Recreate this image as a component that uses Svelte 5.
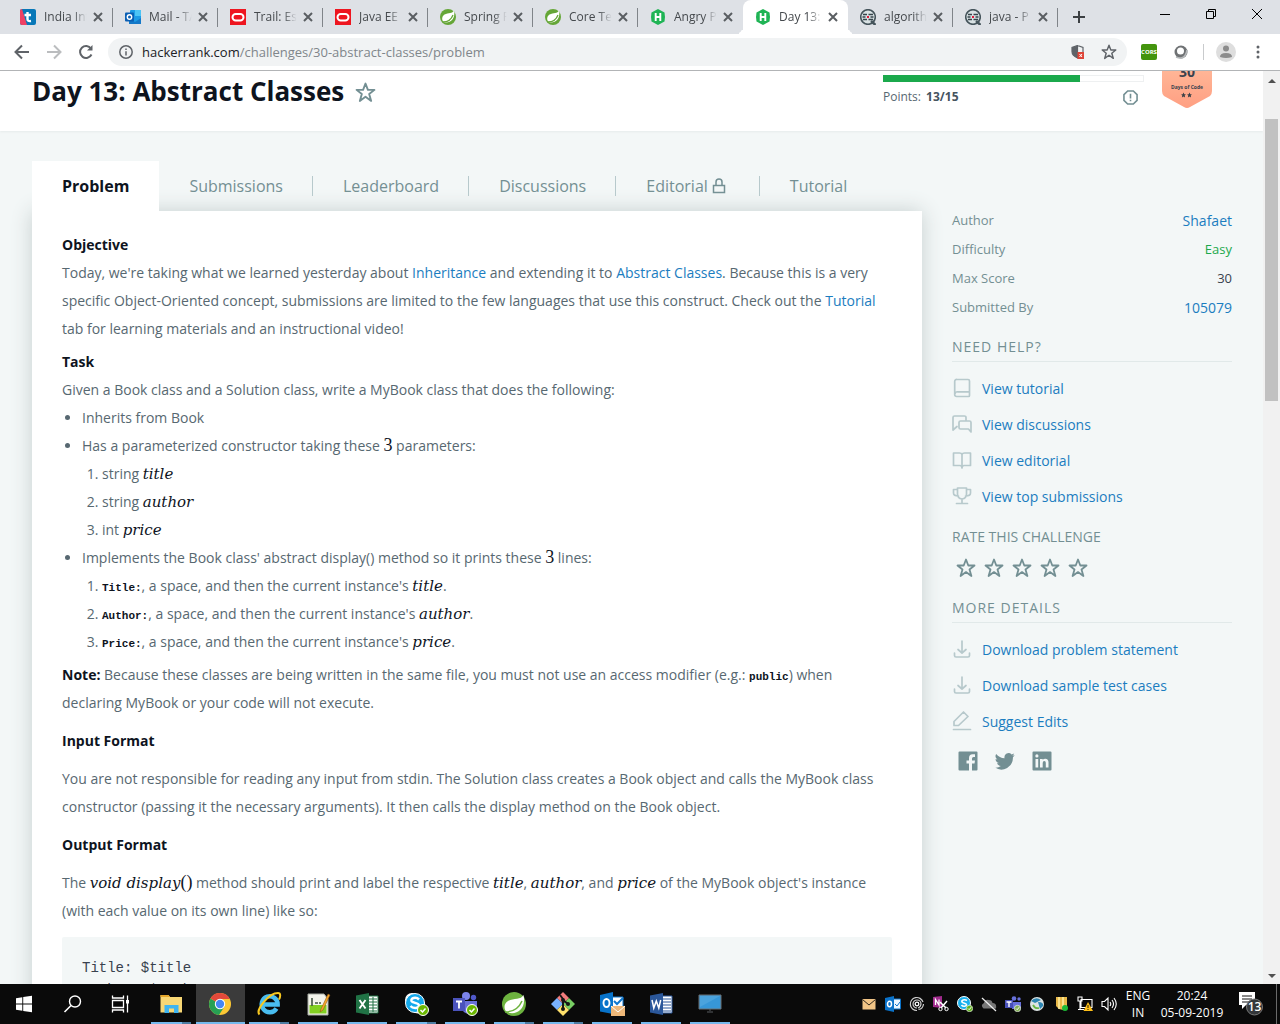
<script lang="ts">
  const browserTabs = [
    { icon: 'tcs', title: 'India Int' },
    { icon: 'outlook', title: 'Mail - TA' },
    { icon: 'oracle', title: 'Trail: Ess' },
    { icon: 'oracle', title: 'Java EE' },
    { icon: 'spring', title: 'Spring F' },
    { icon: 'spring', title: 'Core Te' },
    { icon: 'hacker', title: 'Angry P' },
    { icon: 'hacker', title: 'Day 13:', active: true },
    { icon: 'review', title: 'algorith' },
    { icon: 'review', title: 'java - P' },
  ];
  const sections = ['Submissions', 'Leaderboard', 'Discussions', 'Editorial', 'Tutorial'];
  const facts = [
    { label: 'Author', value: 'Shafaet', kind: 'link' },
    { label: 'Difficulty', value: 'Easy', kind: 'easy' },
    { label: 'Max Score', value: '30', kind: 'plain' },
    { label: 'Submitted By', value: '105079', kind: 'link' },
  ];
  const help = [
    { icon: 'book', text: 'View tutorial' },
    { icon: 'chat', text: 'View discussions' },
    { icon: 'open', text: 'View editorial' },
    { icon: 'trophy', text: 'View top submissions' },
  ];
  const details = [
    { icon: 'download', text: 'Download problem statement' },
    { icon: 'download', text: 'Download sample test cases' },
    { icon: 'edit', text: 'Suggest Edits' },
  ];
  const apps = [
    { icon: 'start', label: 'Start', open: false },
    { icon: 'search', label: 'Search', open: false },
    { icon: 'taskview', label: 'Task View', open: false },
    { icon: 'explorer', label: 'File Explorer', open: true, stack: true },
    { icon: 'chrome', label: 'Chrome', open: true, active: true },
    { icon: 'ie', label: 'Internet Explorer', open: true, stack: true },
    { icon: 'notepad', label: 'Notepad++', open: true },
    { icon: 'excel', label: 'Excel', open: true },
    { icon: 'skype', label: 'Skype', open: true, stack: true },
    { icon: 'teams', label: 'Teams', open: true },
    { icon: 'spring', label: 'Spring', open: true, stack: true },
    { icon: 'git', label: 'Git', open: true, stack: true },
    { icon: 'outlookmail', label: 'Outlook', open: true },
    { icon: 'word', label: 'Word', open: true },
    { icon: 'monitor', label: 'Remote Desktop', open: true },
  ];
  const tray = ['mail', 'outlooktray', 'swirl', 'onenote', 'skype', 'cloud', 'teams', 'globe', 'folder', 'network', 'sound'];
  const score = 13;
  const steps = [
    { code: 'Title:', name: 'title' },
    { code: 'Author:', name: 'author' },
    { code: 'Price:', name: 'price' },
  ];
</script>

{#snippet favicon(name: string)}
  <svg class="favicon" viewBox="0 0 16 16" aria-hidden="true">
    {#if name === 'tcs'}
      <rect width="16" height="16" rx="2" fill="#0878b8" />
      <path d="M0 2q0-2 2-2l5 16H2q-2 0-2-2z" fill="#ef4164" />
      <path d="M7.500 3v7q0 2.500 3.500 2M4.500 6H11" fill="none" stroke="#fff" stroke-width="2.400" />
    {:else if name === 'outlook'}
      <rect x="5" y="1" width="11" height="12" rx="1" fill="#1c9be6" />
      <path d="M10 1h6v6h-6z" fill="#4cc4f5" />
      <path d="M4 9l6 4 6-4v6H4z" fill="#1478c8" />
      <rect y="3.500" width="9" height="9" rx="1" fill="#0a5fb4" />
      <circle cx="4.500" cy="8" r="2.200" fill="none" stroke="#fff" stroke-width="1.400" />
    {:else if name === 'oracle'}
      <rect width="16" height="16" fill="#ee1620" />
      <rect x="2.500" y="5" width="11" height="6.500" rx="3.200" fill="none" stroke="#fff" stroke-width="2" />
    {:else if name === 'spring'}
      <circle cx="8" cy="8" r="8" fill="#65a637" />
      <path d="M14 1.500C12.500 5 8.500 3.500 4.500 5.500 1 8 2 12 4 13.200c5 1.600 12-2.400 10-11.700z" fill="#fff" />
      <path d="M3 13c5 0 8.500-3 10-7" fill="none" stroke="#65a637" stroke-width="1.300" />
    {:else if name === 'hacker'}
      <path d="M8 0l6.500 3.500L15 8l-.5 4.500L8 16l-6.500-3.500L1 8l.5-4.500z" fill="#1fb455" />
      <path d="M5.700 4v8M10.300 4v8M5.700 8h4.600" fill="none" stroke="#fff" stroke-width="1.900" />
    {:else}
      <circle cx="8" cy="8" r="7.300" fill="#d9e2e4" stroke="#45545b" stroke-width="1.600" />
      <path d="M3 5.500h4M8.500 5.500H13M2.500 8h3M10.500 8h3M3 10.500h4M8.500 10.500H13" stroke="#36444b" stroke-width="1.600" />
      <path d="M7 8h2" stroke="#df1a3b" stroke-width="2" />
      <path d="M11 12l4.500 4" stroke="#45545b" stroke-width="2.500" />
    {/if}
  </svg>
{/snippet}

{#snippet star()}
  <svg class="star" viewBox="0 0 20 20" aria-hidden="true">
    <path d="M10 1.500l2.300 6h6.200l-5 4 1.900 6.500-5.400-3.900L4.600 18l1.900-6.500-5-4h6.200z" fill="none" stroke="currentColor" stroke-width="1.800" stroke-linejoin="round" />
  </svg>
{/snippet}

{#snippet lineIcon(name: string)}
  <svg class="line-icon" viewBox="0 0 20 20" aria-hidden="true">
    {#if name === 'book'}
      <path d="M5 1.500h11a1.500 1.500 0 0 1 1.500 1.500v14.500a1 1 0 0 1-1 1H4.500A1.800 1.800 0 0 1 2.700 16.700V3.500a2 2 0 0 1 2.300-2zM3 15.500q1-2 2.500-1.700h12" />
    {:else if name === 'chat'}
      <path d="M1 16V3.500A1.500 1.500 0 0 1 2.500 2h10A1.500 1.500 0 0 1 14 3.500V6M1 16l4-3.500M8.500 7h9A1.500 1.500 0 0 1 19 8.500V18l-2.500-3h-8A1.500 1.500 0 0 1 7 13.500v-5A1.500 1.500 0 0 1 8.500 7z" />
    {:else if name === 'open'}
      <path d="M10 4.500Q9.500 3 7.500 3h-6v12.500H8q2 0 2 2.500 0-2.500 2-2.500h6.500V3h-6Q10.500 3 10 4.500zV17" />
    {:else if name === 'trophy'}
      <path d="M5.500 2h9v6q0 4.500-4.500 5-4.500-.5-4.500-5zM5.500 3.500h-4V7q0 3 5 3M14.500 3.500h4V7q0 3-5 3M10 13v4M4.500 17.500h11" />
    {:else if name === 'download'}
      <path d="M10 2v12M6 10.500l4 3.500 4-3.500M2.500 14v2.500q0 1.500 1.500 1.500h12q1.500 0 1.500-1.500V14" />
    {:else}
      <path d="M2 14.500v-4L11.500 1 16 5.500 6.500 14.500zM1.500 18.500h17" />
    {/if}
  </svg>
{/snippet}

{#snippet check()}
  <circle cx="20" cy="19" r="5.500" fill="#6bb700" stroke="#fff" stroke-width="1" />
  <path d="M17.500 19l2 2 3-3.500" fill="none" stroke="#fff" stroke-width="1.500" />
{/snippet}

{#snippet appIcon(name: string)}
  <svg class="app-icon" viewBox="0 0 26 26" aria-hidden="true">
    {#if name === 'start'}
      <path d="M5 7.200l6.300-1v6.300H5zM12.200 6l8.800-1.300v7.800h-8.800zM5 13.400h6.300v6.300l-6.300-1zM12.200 13.400H21v7.800l-8.800-1.300z" fill="#fff" />
    {:else if name === 'search'}
      <circle cx="15" cy="10.500" r="5.500" fill="none" stroke="#fff" stroke-width="1.400" />
      <path d="M11 14.500L4.500 21" stroke="#fff" stroke-width="1.600" />
    {:else if name === 'taskview'}
      <path d="M3.500 4.500V7h11V4.500M3.500 9.500h11v7h-11zM3.500 21.500V19h11v2.500M18.500 4.500v17" fill="none" stroke="#fff" stroke-width="1.300" />
      <path d="M17 9h3v3.500h-3z" fill="#fff" />
    {:else if name === 'explorer'}
      <path d="M2.500 4h8l1.500 2h12v15.500H2.500z" fill="#f8d775" />
      <path d="M2.500 4h8l1.500 2h-9.500z" fill="#e5a72c" />
      <path d="M6.500 14h14v8H16v-4.500h-5V22H6.500z" fill="#3fb4f0" />
    {:else if name === 'chrome'}
      <circle cx="13" cy="13" r="11" fill="#fbc734" />
      <path d="M13 13L3.500 7.500A11 11 0 0 0 12 24l5.500-8.500z" fill="#27a054" />
      <path d="M13 13L3.500 7.500A11 11 0 0 1 22.700 8H13z" fill="#e3493b" />
      <circle cx="13" cy="13" r="5.200" fill="#fff" />
      <circle cx="13" cy="13" r="4.200" fill="#4587f3" />
    {:else if name === 'ie'}
      <path d="M20.500 17.500a8 8 0 1 1 1.200-4H7" fill="none" stroke="#49bdf0" stroke-width="4.400" />
      <path d="M3.500 23.500C-1 19 13 2 22 2c3 0 2.500 4 1 6.500" fill="none" stroke="#f8c81f" stroke-width="2" />
    {:else if name === 'notepad'}
      <path d="M3 3h16l4 5v16H3z" fill="#f4f4ec" stroke="#a6aaa2" />
      <path d="M4.500 14h17v8.500h-17z" fill="#82d022" />
      <path d="M7 7v8M10 12h3M14 12h2" stroke="#454" stroke-width="1.600" />
      <path d="M16 18l7-15 2 1-7 15-3 2z" fill="#f5a52a" stroke="#855114" stroke-width=".5" />
    {:else if name === 'excel' || name === 'word'}
      <path d="M13 5h11v17H13z" fill="#fff" stroke={name === 'excel' ? '#207245' : '#2b579a'} />
      <path d="M15 8h8M15 11h8M15 14h8M15 17h8M15 20h8" stroke={name === 'excel' ? '#207245' : '#2b579a'} />
      {#if name === 'excel'}<path d="M19 6v15" stroke="#207245" />{/if}
      <path d="M2 4.500L15 2v22L2 21.500z" fill={name === 'excel' ? '#207245' : '#2b579a'} />
      {#if name === 'excel'}
        <path d="M5.500 9l6 8.500M11.500 9l-6 8.500" stroke="#fff" stroke-width="1.900" />
      {:else}
        <path d="M4 9l1.800 8L8.300 10l2.500 7L12.700 9" fill="none" stroke="#fff" stroke-width="1.500" />
      {/if}
    {:else if name === 'skype'}
      <circle cx="9" cy="9" r="7" fill="#fff" /><circle cx="15" cy="15" r="7.500" fill="#fff" />
      <circle cx="12" cy="12" r="9.500" fill="#14a9ec" stroke="#fff" />
      <path d="M16 8.500C13 5.500 7.500 7 8.500 10c1 2.300 7.500 1.500 7.500 4.500 0 3-6 3.500-8.500.5" fill="none" stroke="#fff" stroke-width="2.500" />
      {@render check()}
    {:else if name === 'teams'}
      <circle cx="14" cy="5" r="4" fill="#7b83eb" /><circle cx="21.500" cy="6.500" r="2.700" fill="#5059c9" />
      <path d="M10 10h15v7q0 6-7 6-8 0-8-7z" fill="#6970d8" />
      <path d="M1 7h12v13H1z" fill="#4b53bc" />
      <path d="M4 10.500h6M7 10.500v7" stroke="#fff" stroke-width="1.800" />
      {@render check()}
    {:else if name === 'spring'}
      <circle cx="13" cy="13" r="12" fill="#6db33f" />
      <path d="M22.500 4C20 9 13 7 7 10c-5 3-4 9-1 11 8 4 20-2 16.500-17z" fill="#fff" />
      <path d="M4 21c8 0 14-4 17-11" fill="none" stroke="#6db33f" stroke-width="1.500" />
    {:else if name === 'git'}
      <path d="M13 1l6 6-6 6-6-6z" fill="#f37c7c" /><path d="M7 7l6 6-6 6-6-6z" fill="#78b2ff" />
      <path d="M19 7l6 6-6 6-6-6z" fill="#78ce63" /><path d="M13 13l6 6-6 6-6-6z" fill="#ffe16b" />
      <path d="M10 4l3 4v10M13 9l5 4" fill="none" stroke="#171717" stroke-width="2" />
      <circle cx="13" cy="9" r="2" fill="#171717" /><circle cx="18" cy="13" r="2" fill="#171717" /><circle cx="13" cy="18" r="2" fill="#171717" />
    {:else if name === 'outlookmail'}
      <path d="M12 6h12v11H12z" fill="#fff" stroke="#0f78d0" /><path d="M15 10l3 3 6-6" fill="none" stroke="#0f78d0" stroke-width="2" />
      <path d="M1 4l13-3v22L1 20.500z" fill="#0873ca" />
      <ellipse cx="7.500" cy="12" rx="3" ry="4" fill="none" stroke="#fff" stroke-width="1.900" />
      <path d="M12 15h14v10H12z" fill="#efb879" /><path d="M12 15l7 6 7-6" fill="none" stroke="#fff" />
    {:else}
      <path d="M2 4h22v14H2z" fill="#3797d8" stroke="#6b7175" /><path d="M10 21h6M12 19h2" stroke="#575b5f" />
      <path d="M3 5h20L3 16z" fill="#4ba3dd" />
    {/if}
  </svg>
{/snippet}

{#snippet trayIcon(name: string)}
  <svg class="tray-icon" viewBox="0 0 16 16" aria-hidden="true">
    {#if name === 'mail'}
      <path d="M1.500 3h13v10.500h-13z" fill="#f1c486" /><path d="M1.500 3.500L8 9l6.500-5.500" fill="none" stroke="#30271d" />
    {:else if name === 'outlooktray'}
      <path d="M8 3h7.500v10H8z" fill="#eaf5ff" stroke="#0a72c9" /><path d="M10 8l2 2 3-4" fill="none" stroke="#0a72c9" />
      <path d="M0 2l9-2v16l-9-2z" fill="#0a72c9" /><ellipse cx="4.500" cy="8" rx="2" ry="2.700" fill="none" stroke="#fff" stroke-width="1.500" />
    {:else if name === 'swirl'}
      <path d="M8 14.500A6.500 6.500 0 1 1 14 6M14.500 8q-.5 5-5 5.500M8 12a4 4 0 1 1 4-4q-.5 3.500-3 4" fill="none" stroke="#cfcfcf" stroke-width="1.200" />
      <circle cx="8" cy="8" r="1.800" fill="none" stroke="#fff" stroke-width="1.300" />
    {:else if name === 'onenote'}
      <path d="M0 1l9-1v12l-9-1z" fill="#a12b8d" /><path d="M2.500 9V3.500L6 9V3.500" fill="none" stroke="#fff" stroke-width="1.300" />
      <path d="M7 6l6 6M14 5l-6 7" stroke="#fff" stroke-width="1.500" />
      <circle cx="7.500" cy="13" r="1.700" fill="none" stroke="#fff" /><circle cx="13.500" cy="13" r="1.700" fill="none" stroke="#fff" />
    {:else if name === 'skype'}
      <circle cx="7" cy="7" r="6.500" fill="#18b0ed" stroke="#fff" /><path d="M10 4.500C7.500 3 4 4 5 6c1 1.500 5 1 4.500 3-.5 1.800-4 1.500-5 0" fill="none" stroke="#fff" stroke-width="1.600" />
      <circle cx="12.500" cy="12.500" r="3.200" fill="#61b21e" stroke="#fff" stroke-width=".6" /><path d="M11 12.500l1.200 1.200 2-2.500" fill="none" stroke="#fff" />
    {:else if name === 'cloud'}
      <path d="M2.500 12.500Q-1 9 3 7q1-4 5-3 3 0 3.500 3Q16 7 15 12.500z" fill="#777" /><path d="M1 2l14 13" stroke="#eee" stroke-width="1.200" />
    {:else if name === 'teams'}
      <circle cx="9" cy="2.500" r="2.300" fill="#6871dc" /><circle cx="14" cy="3" r="1.700" fill="#6871dc" /><path d="M7 6h9v7H7z" fill="#6871dc" />
      <path d="M0 4h8v8H0z" fill="#4850b8" /><path d="M1.500 6h5M4 6v5" stroke="#fff" stroke-width="1.400" />
      <circle cx="12.500" cy="12.500" r="3.200" fill="#81ad56" stroke="#fff" stroke-width=".6" /><path d="M11 12.500l1.200 1.200 2-2.500" fill="none" stroke="#fff" />
    {:else if name === 'globe'}
      <circle cx="8" cy="8" r="7" fill="#dce3e3" /><path d="M2 5q5-5 10-1L6 7zM9 6q6 0 5 4l-3 3z" fill="#2d86b3" /><path d="M4 9q2 4 6 3" fill="none" stroke="#67b744" stroke-width="1.800" />
    {:else if name === 'folder'}
      <path d="M3 1h11v11l-4 2-4-1-3-3z" fill="#e9b949" /><path d="M6 1v12M10 1v12" stroke="#fff0a3" stroke-width="1.500" /><circle cx="12" cy="12" r="3" fill="#1dba36" />
    {:else if name === 'network'}
      <path d="M1 1h4v4H1zM4 3.500h11v8H4zM3 5v8M1 13.500h6" fill="none" stroke="#fff" stroke-width="1.100" />
      <path d="M11 6l5 9H6.500z" fill="#ffbf18" /><path d="M11 9v3M11 13v1" stroke="#271c00" />
    {:else}
      <path d="M1 5.500h2.500L7 2v12l-3.500-3.500H1zM9 6q1.500 2 0 4M11 4q3 4 0 8M13 2q4.500 6 0 12" fill="none" stroke="#fff" stroke-width="1.100" />
    {/if}
  </svg>
{/snippet}

<div class="desktop">
  <div class="tab-strip">
    {#each browserTabs as tab}
      <div class="browser-tab" class:active={tab.active}>
        {@render favicon(tab.icon)}
        <span class="tab-title">{tab.title}</span>
        <button class="close" aria-label="Close tab">
          <svg viewBox="0 0 10 10"><path d="M1 1l8 8M9 1L1 9" /></svg>
        </button>
      </div>
    {/each}
    <button class="new-tab" aria-label="New tab"><svg viewBox="0 0 12 12"><path d="M6 0v12M0 6h12" /></svg></button>
    <div class="window-controls">
      <button aria-label="Minimize"><svg viewBox="0 0 10 10"><path d="M0 5.500h10" /></svg></button>
      <button aria-label="Restore"><svg viewBox="0 0 10 10"><path d="M.5 2.500h7v7h-7zM2.500 2.500v-2h7v7h-2" /></svg></button>
      <button aria-label="Close"><svg viewBox="0 0 10 10"><path d="M0 0l10 10M10 0L0 10" /></svg></button>
    </div>
  </div>

  <div class="toolbar">
    <div class="nav-buttons">
      <button class="nav" aria-label="Back"><svg viewBox="0 0 16 16"><path d="M15 8H2M8 1.500L1.500 8 8 14.500" /></svg></button>
      <button class="nav faded" aria-label="Forward"><svg viewBox="0 0 16 16"><path d="M1 8h13M8 1.500L14.500 8 8 14.500" /></svg></button>
      <button class="nav" aria-label="Reload"><svg viewBox="0 0 16 16"><path d="M13.500 10.500A6 6 0 1 1 13 4.500" /><path d="M14.500 1v5.500H9z" fill="currentColor" stroke="none" /></svg></button>
    </div>
    <div class="address">
      <svg class="info" viewBox="0 0 14 14" aria-hidden="true"><circle cx="7" cy="7" r="6.200" /><path d="M7 6.200v4.300M7 3.500v1.500" /></svg>
      <a class="url" href="#problem">hackerrank.com<span>/challenges/30-abstract-classes/problem</span></a>
      <svg class="shield" viewBox="0 0 14 14" aria-hidden="true">
        <path d="M6.500.5L1 2.500v4q0 4 5.500 6.500zM6.500.5L12 2.500V7" fill="none" stroke="#5f6368" stroke-width="1.200" />
        <path d="M6.500.5L1 2.500v4q0 4 5.500 6.500z" fill="#5f6368" />
        <path d="M6.500 7H13v7H6.500z" fill="#df4538" /><path d="M8.500 9l2.500 3M11 9l-2.500 3" stroke="#fff" />
      </svg>
      <button class="bookmark" aria-label="Bookmark">{@render star()}</button>
    </div>
    <button class="cors">CORS</button>
    <svg class="ring" viewBox="0 0 14 14" aria-hidden="true"><circle cx="7" cy="7" r="6.500" fill="#6f7274" /><path d="M2 12q9 4 11-7" fill="none" stroke="#b5b8ba" stroke-width="1.500" /><circle cx="6.500" cy="6" r="3.500" fill="#fff" /></svg>
    <span class="divider"></span>
    <svg class="avatar" viewBox="0 0 20 20" aria-hidden="true"><circle cx="10" cy="10" r="10" fill="#dedede" /><circle cx="10" cy="6.500" r="3" fill="#8c8c8c" /><path d="M4 15q0-4 6-4t6 4q-6 2-12 0z" fill="#8c8c8c" /></svg>
    <button class="more" aria-label="Menu"><svg viewBox="0 0 4 14"><circle cx="2" cy="2" r="1.500" /><circle cx="2" cy="7" r="1.500" /><circle cx="2" cy="12" r="1.500" /></svg></button>
  </div>

  <div class="viewport">
    <div class="page">
      <header>
        <h1>Day 13: Abstract Classes</h1>
        <button class="favourite" aria-label="Bookmark challenge">{@render star()}</button>
        <div class="progress">
          <div class="track"><div class="fill" style:width="76%"></div></div>
          <div class="points">
            <span>Points: <b>{score}/15</b></span>
            <svg viewBox="0 0 16 16" aria-hidden="true"><path d="M5 1h6l4 4v6l-4 4H5l-4-4V5zM8 4v5M8 10.500V12" /></svg>
          </div>
        </div>
        <svg class="badge" viewBox="0 0 50 37" role="img" aria-label="30 Days of Code">
          <defs><linearGradient id="peach" x1="0" y1="0" x2="0" y2="1"><stop offset="0" stop-color="#ffb596" /><stop offset="1" stop-color="#ff9f82" /></linearGradient></defs>
          <path d="M0 0h50v20q0 3-2 5L28 36q-3 2-6 0L2 25q-2-2-2-5z" fill="url(#peach)" />
          <text x="25" y="6" class="badge-number">30</text>
          <text x="25" y="18" class="badge-text">Days of Code</text>
          <path d="M21.500 21.500l.8 1.700 1.700.2-1.300 1.200.4 1.900-1.600-1-1.600 1 .4-1.900-1.300-1.200 1.700-.2zM27.500 21.500l.8 1.700 1.700.2-1.300 1.200.4 1.900-1.600-1-1.600 1 .4-1.900-1.300-1.200 1.700-.2z" fill="#3b4147" />
        </svg>
      </header>

      <div class="columns">
        <div class="main-column">
          <nav class="section-tabs">
            <a class="current" href="#problem">Problem</a>
            {#each sections as section}
              <a href="#{section}"><span>{section}</span>{#if section === 'Editorial'}<svg viewBox="0 0 14 16" aria-hidden="true"><path d="M1.500 7.500h11v7h-11zM4 7V4q0-3 3-3t3 3v3" /></svg>{/if}</a>
            {/each}
          </nav>
          <main id="problem">
            <p class="objective"><b>Objective</b><br />
              Today, we're taking what we learned yesterday about <a href="#inheritance">Inheritance</a> and extending it to <a href="#abstract">Abstract Classes</a>. Because this is a very specific Object-Oriented concept, submissions are limited to the few languages that use this construct. Check out the <a href="#tutorial">Tutorial</a> tab for learning materials and an instructional video!</p>
            <p><b>Task</b><br />Given a Book class and a Solution class, write a MyBook class that does the following:</p>
            <ul>
              <li>Inherits from Book</li>
              <li>Has a parameterized constructor taking these <span class="num">3</span> parameters:
                <ol>
                  <li>string <i>title</i></li>
                  <li>string <i>author</i></li>
                  <li>int <i>price</i></li>
                </ol>
              </li>
              <li>Implements the Book class' abstract display() method so it prints these <span class="num">3</span> lines:
                <ol>
                  {#each steps as step}
                    <li><code>{step.code}</code>, a space, and then the current instance's <i>{step.name}</i>.</li>
                  {/each}
                </ol>
              </li>
            </ul>
            <p class="note"><b>Note:</b> Because these classes are being written in the same file, you must not use an access modifier (e.g.: <code>public</code>) when declaring MyBook or your code will not execute.</p>
            <h2>Input Format</h2>
            <p>You are not responsible for reading any input from stdin. The Solution class creates a Book object and calls the MyBook class constructor (passing it the necessary arguments). It then calls the display method on the Book object.</p>
            <h2>Output Format</h2>
            <p>The <i>void display</i><span class="num">()</span> method should print and label the respective <i>title</i>, <i>author</i>, and <i>price</i> of the MyBook object's instance (with each value on its own line) like so:</p>
            <pre>{'Title: $title\nAuthor: $author\nPrice: $price'}</pre>
          </main>
        </div>

        <aside>
          <dl>
            {#each facts as fact}
              <div><dt>{fact.label}</dt><dd class={fact.kind}>{#if fact.kind === 'link'}<a href="#fact">{fact.value}</a>{:else}{fact.value}{/if}</dd></div>
            {/each}
          </dl>
          <h3 class="ruled">NEED HELP?</h3>
          <ul class="links">
            {#each help as item}<li>{@render lineIcon(item.icon)}<a href="#help">{item.text}</a></li>{/each}
          </ul>
          <h3>RATE THIS CHALLENGE</h3>
          <div class="stars">
            {#each [1, 2, 3, 4, 5] as n}<button aria-label="Rate {n}">{@render star()}</button>{/each}
          </div>
          <h3 class="ruled">MORE DETAILS</h3>
          <ul class="links">
            {#each details as item}<li>{@render lineIcon(item.icon)}<a href="#details">{item.text}</a></li>{/each}
          </ul>
          <div class="social">
            <a href="#facebook" aria-label="Facebook"><svg viewBox="0 0 20 20"><path d="M1.500.5h17a1 1 0 0 1 1 1v17a1 1 0 0 1-1 1H14v-7h2.500l.5-3h-3V7.500q0-1.500 1.500-1.500H17V3.200h-2.500q-3.500 0-3.500 3.800v2.500H8.500v3H11v7H1.500a1 1 0 0 1-1-1v-17a1 1 0 0 1 1-1z" /></svg></a>
            <a href="#twitter" aria-label="Twitter"><svg viewBox="0 0 24 24"><path d="M23.600 4.900a9.700 9.700 0 0 1-2.800.8 4.900 4.900 0 0 0 2.200-2.700 9.700 9.700 0 0 1-3.100 1.200 4.900 4.900 0 0 0-8.400 4.500A13.900 13.900 0 0 1 1.400 3.600a4.900 4.900 0 0 0 1.500 6.500 4.900 4.900 0 0 1-2.200-.6 4.900 4.900 0 0 0 3.900 4.900 4.900 4.900 0 0 1-2.200.1 4.900 4.900 0 0 0 4.600 3.400A9.900 9.900 0 0 1 0 19.900 13.900 13.900 0 0 0 21.500 7.500a10 10 0 0 0 2.100-2.600z" /></svg></a>
            <a href="#linkedin" aria-label="LinkedIn"><svg viewBox="0 0 20 20"><path fill-rule="evenodd" d="M1.500.5h17a1 1 0 0 1 1 1v17a1 1 0 0 1-1 1h-17a1 1 0 0 1-1-1v-17a1 1 0 0 1 1-1zM3.500 8v8.500h2.700V8zM4.900 3.300a1.600 1.600 0 1 0 0 3.200 1.600 1.600 0 0 0 0-3.200zM8 8v8.500h2.700V12q0-2 1.600-2t1.500 2v4.500h2.700v-5q0-3.800-3.200-3.800-1.800 0-2.600 1.400V8z" /></svg></a>
          </div>
        </aside>
      </div>
    </div>
    <div class="scrollbar">
      <svg viewBox="0 0 8 4"><path d="M0 4l4-4 4 4z" /></svg>
      <div class="rail"><div class="thumb" style:height="34%"></div></div>
      <svg viewBox="0 0 8 4"><path d="M0 0l4 4 4-4z" /></svg>
    </div>
  </div>

  <footer>
    {#each apps as app}
      <button class="app" class:open={app.open} class:active={app.active} class:stack={app.stack} aria-label={app.label}>{@render appIcon(app.icon)}</button>
    {/each}
    <div class="tray">
      {#each tray as item}{@render trayIcon(item)}{/each}
    </div>
    <div class="lang">ENG<br />IN</div>
    <div class="clock">20:24<br />05-09-2019</div>
    <button class="notice" aria-label="Notifications">
      <svg viewBox="0 0 26 24"><path d="M1 0h16v13H8l-4 4v-4H1z" fill="#fff" /><path d="M4 4h10M4 7h10M4 10h7" stroke="#111" /><circle cx="16.500" cy="15" r="8" fill="#34373a" stroke="#777" /></svg>
      <span>13</span>
    </button>
  </footer>
</div>

<style>
  :global(body) { margin: 0; }
  .desktop, .desktop * { box-sizing: border-box; }
  .desktop { display: flex; flex-direction: column; height: 100vh; overflow: hidden; font-family: "Open Sans", sans-serif; font-size: 14px; color: #576871; }
  button { border: 0; padding: 0; background: none; color: inherit; font: inherit; }
  svg { display: block; flex: none; }
  a { color: #1b7dc0; text-decoration: none; }

  .tab-strip { display: flex; align-items: stretch; height: 34px; flex: none; padding-left: 8px; background: #dee1e6; }
  .browser-tab { display: flex; align-items: center; flex: 0 1 105px; min-width: 0; padding: 0 10px 0 12px; position: relative; }
  .browser-tab::after { content: ""; position: absolute; right: 0; top: 8px; width: 1px; height: 19px; background: #808489; }
  .browser-tab.active { background: #fff; border-radius: 8px 8px 0 0; }
  .browser-tab:has(+ .active)::after { display: none; }
  .browser-tab.active::before, .browser-tab.active::after { content: ""; position: absolute; top: auto; bottom: 0; width: 8px; height: 8px; background: none; }
  .browser-tab.active::before { left: -8px; border-bottom-right-radius: 8px; box-shadow: 4px 4px 0 #fff; }
  .browser-tab.active::after { right: -8px; border-bottom-left-radius: 8px; box-shadow: -4px 4px 0 #fff; }
  .favicon { width: 16px; height: 16px; }
  .tab-title { flex: 1; min-width: 0; margin: 0 4px 0 8px; overflow: hidden; white-space: nowrap; font: 12px/16px "Open Sans", sans-serif; color: #45494d; mask-image: linear-gradient(90deg, #000 65%, transparent 95%); }
  .close svg { width: 10px; height: 10px; fill: none; stroke: #5a5e62; stroke-width: 2; }
  .new-tab { margin-left: 15px; }
  .new-tab svg { width: 12px; height: 12px; stroke: #3c4043; stroke-width: 2; }
  .window-controls { display: flex; margin-left: auto; height: 28px; }
  .window-controls button { width: 46px; display: grid; place-items: center; }
  .window-controls svg { width: 10px; height: 10px; fill: none; stroke: #000; stroke-width: 1; }

  .toolbar { display: flex; align-items: center; flex: none; height: 37px; padding: 0 20px 0 14px; border-bottom: 1px solid #b2b4b6; background: #fff; color: #5f6368; }
  .nav-buttons { display: flex; gap: 16px; margin-right: 14px; }
  .nav svg { width: 16px; height: 16px; fill: none; stroke: currentColor; stroke-width: 2; }
  .faded { color: #bbbdbf; }
  .address { display: flex; align-items: center; flex: 1; height: 28px; margin-right: 14px; padding: 0 10px 0 11px; border-radius: 14px; background: #f1f3f4; }
  .info { width: 14px; height: 14px; fill: none; stroke: #5f6368; stroke-width: 1.5; }
  .url { flex: 1; margin-left: 9px; color: #202124; font-size: 13px; white-space: nowrap; }
  .url span { color: #80868b; }
  .shield { width: 14px; height: 14px; margin-right: 16px; }
  .bookmark .star { width: 16px; height: 16px; }
  .cors { width: 16px; height: 16px; border-radius: 2px; background: #43940d; color: #fff; font-size: 6px; font-weight: 700; line-height: 16px; }
  .ring { width: 14px; height: 14px; margin: 0 15px 0 17px; }
  .divider { width: 1px; height: 16px; background: #c9cbcd; }
  .avatar { width: 20px; height: 20px; margin: 0 20px 0 12px; }
  .more svg { width: 4px; height: 14px; fill: #5f6368; }

  .viewport { display: flex; flex: 1; min-height: 0; overflow: hidden; background: #f3f7f7; }
  .page { flex: 1; min-width: 0; }
  header { display: flex; align-items: flex-start; height: 60px; padding: 0 51px 0 32px; background: #fff; box-shadow: 0 1px 2px #e6ebeb; }
  h1 { margin: 3px 0 0; color: #0e141e; font-size: 26px; font-weight: 700; line-height: 34px; white-space: nowrap; }
  .favourite { margin: 11px auto 0 11px; color: #738f93; }
  .favourite .star { width: 21px; height: 21px; }
  .progress { width: 261px; margin: 4px 18px 0 0; }
  .track { height: 7px; border: 1px solid #eef0f1; }
  .fill { height: 7px; margin: -1px; background: #1ba94c; }
  .points { display: flex; justify-content: space-between; align-items: center; padding: 6px 6px 0 0; font-size: 12px; line-height: 18px; }
  .points b { margin-left: 2px; color: #45545f; }
  .points svg { width: 15px; height: 15px; fill: none; stroke: #738f93; stroke-width: 1.7; }
  .badge { width: 50px; height: 37px; }
  .badge-number { font-size: 14px; font-weight: 700; text-anchor: middle; fill: #39424e; }
  .badge-text { font-size: 5px; font-weight: 700; text-anchor: middle; fill: #39424e; }

  .columns { display: flex; gap: 30px; padding: 30px 31px 0 32px; }
  .main-column { flex: 1; min-width: 0; }
  .section-tabs { display: flex; align-items: center; height: 50px; font-size: 16px; line-height: 20px; }
  .section-tabs a { display: flex; align-items: center; gap: 4px; padding: 0 29px 0 30px; border-right: 1px solid #b7c9cc; color: #738f93; white-space: nowrap; }
  .section-tabs a:last-child { border: 0; }
  .section-tabs .current { position: relative; z-index: 1; height: 50px; padding: 0 30px; border: 0; background: #fff; color: #0e141e; font-weight: 700; }
  .section-tabs svg { width: 14px; height: 16px; margin-right: 4px; fill: none; stroke: #738f93; stroke-width: 1.5; }
  main { position: relative; padding: 20px 30px 30px; background: #fff; box-shadow: 0 0 20px #c6cfcf; line-height: 28px; }
  b, h2 { color: #0e141e; font-weight: 700; }
  p { margin: 0; }
  .objective { margin-bottom: 5px; }
  main ul, main ol { margin: 0; padding-left: 20px; }
  i { color: #0e141e; font: italic 15px/1 "DejaVu Serif", serif; }
  .num { color: #0e141e; font: 18px/1 "Liberation Serif", serif; }
  code { color: #0e141e; font: bold 11px/1 "Liberation Mono", monospace; }
  .note { margin-top: 5px; }
  h2 { margin: 10px 0; font-size: 14px; line-height: 28px; }
  pre { margin: 12px 0 0; padding: 20px; border-radius: 2px; background: #f3f7f7; color: #39424e; font: 14px/22px "Liberation Mono", monospace; }

  aside { width: 280px; padding-top: 45px; }
  dl { margin: 0 0 2px; }
  dl div { display: flex; justify-content: space-between; align-items: center; line-height: 29px; }
  dt { color: #738f93; font-size: 13px; }
  dd { margin: 0; }
  .easy { color: #1ba94c; font-size: 13px; }
  .plain { color: #39424e; font-size: 13px; }
  h3 { margin: 0; padding: 8px 0 0; color: #738f93; font-size: 14px; font-weight: 400; line-height: 30px; }
  .ruled { border-bottom: 1px solid #e1e9e9; letter-spacing: 1px; line-height: 29px; }
  .links { margin: 8px 0 0; padding: 0; list-style: none; }
  .links li { display: flex; align-items: center; gap: 10px; min-height: 36px; }
  .line-icon { width: 20px; height: 20px; fill: none; stroke: #b7c9cc; stroke-width: 1.7; stroke-linecap: round; stroke-linejoin: round; }
  .stars { display: flex; gap: 8px; padding: 6px 4px 7px; color: #738f93; }
  .stars .star { width: 20px; height: 20px; }
  .social { display: flex; gap: 17px; padding: 12px 6px; }
  .social svg { width: 20px; height: 20px; fill: #738f93; }

  .scrollbar { display: flex; flex-direction: column; align-items: center; width: 17px; padding: 8px 0 6px; background: #f1f1f1; }
  .scrollbar svg { width: 8px; height: 4px; fill: #505050; }
  .rail { flex: 1; width: 13px; padding: 36px 0 25px; }
  .thumb { background: #c1c1c1; }

  footer { display: flex; align-items: center; flex: none; height: 40px; padding-right: 3px; background: #0a0a0a; color: #fff; }
  .app { display: grid; place-items: center; flex: 0 1 49px; height: 40px; padding-right: 1px; position: relative; }
  .app-icon { width: 26px; height: 26px; }
  .app.open::after { content: ""; position: absolute; left: 4px; right: 5px; bottom: 0; height: 2px; background: #76b9ed; }
  .app.stack::after { background: linear-gradient(90deg, #76b9ed 31px, #4d7ca2 31px); }
  .app.active { background: #3b3b3b; }
  .app.active::after { left: 0; right: 0; }
  .tray { display: flex; gap: 8px; margin-left: auto; }
  .tray-icon { width: 16px; height: 16px; }
  .lang, .clock { font-size: 12px; line-height: 17px; text-align: center; }
  .lang { width: 42px; }
  .clock { width: 66px; white-space: nowrap; }
  .notice { display: grid; height: 40px; align-items: center; padding: 0 12px 0 13px; border-right: 1px solid #6a6a6a; }
  .notice svg, .notice span { grid-area: 1 / 1; }
  .notice svg { width: 26px; height: 24px; }
  .notice span { padding: 6px 0 0 7px; font-size: 12px; font-weight: 600; line-height: 18px; text-align: center; }
</style>
